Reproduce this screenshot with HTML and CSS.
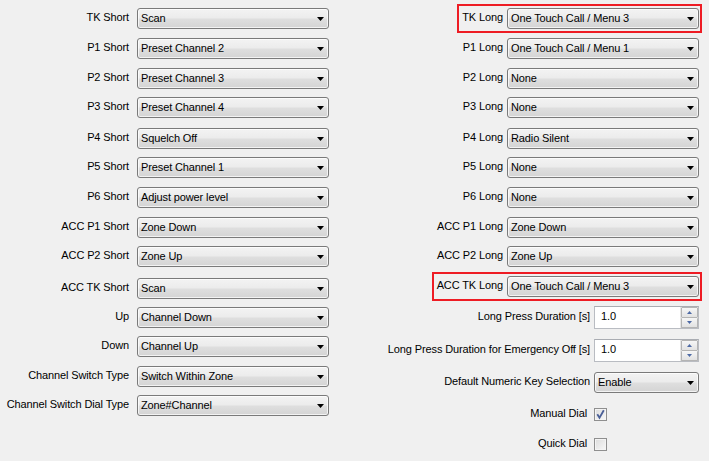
FILE: index.html
```html
<!DOCTYPE html>
<html>
<head>
<meta charset="utf-8">
<link rel="stylesheet" href="styles.css">
</head>
<body>
<div class="page">
  <div class="col col-left">
    <div class="row"><span class="lbl">TK Short</span><div class="combo"><span class="val">Scan</span><svg class="arr" width="7" height="4" viewBox="0 0 7 4"><path d="M0 0H7L3.5 4Z"/></svg></div></div>
    <div class="row"><span class="lbl">P1 Short</span><div class="combo"><span class="val">Preset Channel 2</span><svg class="arr" width="7" height="4" viewBox="0 0 7 4"><path d="M0 0H7L3.5 4Z"/></svg></div></div>
    <div class="row"><span class="lbl">P2 Short</span><div class="combo"><span class="val">Preset Channel 3</span><svg class="arr" width="7" height="4" viewBox="0 0 7 4"><path d="M0 0H7L3.5 4Z"/></svg></div></div>
    <div class="row"><span class="lbl">P3 Short</span><div class="combo"><span class="val">Preset Channel 4</span><svg class="arr" width="7" height="4" viewBox="0 0 7 4"><path d="M0 0H7L3.5 4Z"/></svg></div></div>
    <div class="row"><span class="lbl">P4 Short</span><div class="combo"><span class="val">Squelch Off</span><svg class="arr" width="7" height="4" viewBox="0 0 7 4"><path d="M0 0H7L3.5 4Z"/></svg></div></div>
    <div class="row"><span class="lbl">P5 Short</span><div class="combo"><span class="val">Preset Channel 1</span><svg class="arr" width="7" height="4" viewBox="0 0 7 4"><path d="M0 0H7L3.5 4Z"/></svg></div></div>
    <div class="row"><span class="lbl">P6 Short</span><div class="combo"><span class="val">Adjust power level</span><svg class="arr" width="7" height="4" viewBox="0 0 7 4"><path d="M0 0H7L3.5 4Z"/></svg></div></div>
    <div class="row"><span class="lbl">ACC P1 Short</span><div class="combo"><span class="val">Zone Down</span><svg class="arr" width="7" height="4" viewBox="0 0 7 4"><path d="M0 0H7L3.5 4Z"/></svg></div></div>
    <div class="row"><span class="lbl">ACC P2 Short</span><div class="combo"><span class="val">Zone Up</span><svg class="arr" width="7" height="4" viewBox="0 0 7 4"><path d="M0 0H7L3.5 4Z"/></svg></div></div>
    <div class="row"><span class="lbl">ACC TK Short</span><div class="combo"><span class="val">Scan</span><svg class="arr" width="7" height="4" viewBox="0 0 7 4"><path d="M0 0H7L3.5 4Z"/></svg></div></div>
    <div class="row"><span class="lbl">Up</span><div class="combo"><span class="val">Channel Down</span><svg class="arr" width="7" height="4" viewBox="0 0 7 4"><path d="M0 0H7L3.5 4Z"/></svg></div></div>
    <div class="row"><span class="lbl">Down</span><div class="combo"><span class="val">Channel Up</span><svg class="arr" width="7" height="4" viewBox="0 0 7 4"><path d="M0 0H7L3.5 4Z"/></svg></div></div>
    <div class="row"><span class="lbl">Channel Switch Type</span><div class="combo"><span class="val">Switch Within Zone</span><svg class="arr" width="7" height="4" viewBox="0 0 7 4"><path d="M0 0H7L3.5 4Z"/></svg></div></div>
    <div class="row"><span class="lbl">Channel Switch Dial Type</span><div class="combo"><span class="val">Zone#Channel</span><svg class="arr" width="7" height="4" viewBox="0 0 7 4"><path d="M0 0H7L3.5 4Z"/></svg></div></div>
  </div>

  <div class="col col-right">
    <div class="row"><div class="hl"><span class="lbl">TK Long</span><div class="combo"><span class="val">One Touch Call / Menu 3</span><svg class="arr" width="7" height="4" viewBox="0 0 7 4"><path d="M0 0H7L3.5 4Z"/></svg></div></div></div>
    <div class="row"><span class="lbl">P1 Long</span><div class="combo"><span class="val">One Touch Call / Menu 1</span><svg class="arr" width="7" height="4" viewBox="0 0 7 4"><path d="M0 0H7L3.5 4Z"/></svg></div></div>
    <div class="row"><span class="lbl">P2 Long</span><div class="combo"><span class="val">None</span><svg class="arr" width="7" height="4" viewBox="0 0 7 4"><path d="M0 0H7L3.5 4Z"/></svg></div></div>
    <div class="row"><span class="lbl">P3 Long</span><div class="combo"><span class="val">None</span><svg class="arr" width="7" height="4" viewBox="0 0 7 4"><path d="M0 0H7L3.5 4Z"/></svg></div></div>
    <div class="row"><span class="lbl">P4 Long</span><div class="combo"><span class="val">Radio Silent</span><svg class="arr" width="7" height="4" viewBox="0 0 7 4"><path d="M0 0H7L3.5 4Z"/></svg></div></div>
    <div class="row"><span class="lbl">P5 Long</span><div class="combo"><span class="val">None</span><svg class="arr" width="7" height="4" viewBox="0 0 7 4"><path d="M0 0H7L3.5 4Z"/></svg></div></div>
    <div class="row"><span class="lbl">P6 Long</span><div class="combo"><span class="val">None</span><svg class="arr" width="7" height="4" viewBox="0 0 7 4"><path d="M0 0H7L3.5 4Z"/></svg></div></div>
    <div class="row"><span class="lbl">ACC P1 Long</span><div class="combo"><span class="val">Zone Down</span><svg class="arr" width="7" height="4" viewBox="0 0 7 4"><path d="M0 0H7L3.5 4Z"/></svg></div></div>
    <div class="row"><span class="lbl">ACC P2 Long</span><div class="combo"><span class="val">Zone Up</span><svg class="arr" width="7" height="4" viewBox="0 0 7 4"><path d="M0 0H7L3.5 4Z"/></svg></div></div>
    <div class="row"><div class="hl"><span class="lbl">ACC TK Long</span><div class="combo"><span class="val">One Touch Call / Menu 3</span><svg class="arr" width="7" height="4" viewBox="0 0 7 4"><path d="M0 0H7L3.5 4Z"/></svg></div></div></div>
    <div class="row"><span class="lbl">Long Press Duration [s]</span><div class="spin"><span class="val">1.0</span><div class="spin-btns"><span class="sb"><svg width="5" height="3" viewBox="0 0 5 3"><path d="M0 3H5L2.5 0Z"/></svg></span><span class="sb"><svg width="5" height="3" viewBox="0 0 5 3"><path d="M0 0H5L2.5 3Z"/></svg></span></div></div></div>
    <div class="row"><span class="lbl">Long Press Duration for Emergency Off [s]</span><div class="spin"><span class="val">1.0</span><div class="spin-btns"><span class="sb"><svg width="5" height="3" viewBox="0 0 5 3"><path d="M0 3H5L2.5 0Z"/></svg></span><span class="sb"><svg width="5" height="3" viewBox="0 0 5 3"><path d="M0 0H5L2.5 3Z"/></svg></span></div></div></div>
    <div class="row"><span class="lbl">Default Numeric Key Selection</span><div class="combo combo-sm"><span class="val">Enable</span><svg class="arr" width="7" height="4" viewBox="0 0 7 4"><path d="M0 0H7L3.5 4Z"/></svg></div></div>
    <div class="row"><span class="lbl lbl-chk">Manual Dial</span><div class="chk-slot"><span class="chk"><svg width="11" height="11" viewBox="0 0 11 11"><path d="M2.3 5.3L4.5 8.8L8.8 1.3" fill="none" stroke="#4a5f97" stroke-width="1.8"/></svg></span></div></div>
    <div class="row"><span class="lbl lbl-chk">Quick Dial</span><div class="chk-slot"><span class="chk"></span></div></div>
  </div>
</div>
</body>
</html>
```
FILE: styles.css
```css
html, body {
  margin: 0;
  padding: 0;
  background: #f0f0f0;
}
body {
  font-family: "Liberation Sans", Arial, sans-serif;
  font-size: 11px;
  letter-spacing: -0.12px;
  color: #000;
  width: 709px;
  height: 461px;
  overflow: hidden;
}
.page {
  display: flex;
  padding-top: 8px;
}
.col {
  display: grid;
  grid-template-columns: 1fr;
  align-items: start;
}
.col-left {
  width: 329px;
  grid-template-rows: 30px 30px 29px 31px 29px 30px 30px 29px 32px 29px 29px 30px 29px 21px;
}
.col-right {
  flex: 1;
  padding-right: 10px;
  grid-template-rows: 30px 30px 29px 31px 29px 30px 30px 29px 30px 30px 33px 33px 36px 30px 13px;
}
.row {
  display: flex;
  align-items: center;
  justify-content: flex-end;
}
.col-left .row { gap: 8px; }
.col-right .row { gap: 4px; }
.lbl {
  white-space: nowrap;
  line-height: 13px;
  position: relative;
  top: -1px;
}
.hl {
  display: flex;
  align-items: center;
  gap: 4px;
  position: relative;
}
.hl::after {
  content: "";
  position: absolute;
  left: -5px;
  right: -3px;
  top: -4px;
  bottom: -4px;
  border: 2px solid #ee1c24;
  pointer-events: none;
}
.combo {
  box-sizing: border-box;
  width: 192px;
  height: 21px;
  border: 1px solid #7a7a7a;
  border-radius: 3px;
  background: linear-gradient(#f3f3f3 0%, #ececec 45%, #dedede 55%, #d4d4d4 100%);
  box-shadow: inset 0 0 0 1px rgba(255,255,255,0.7);
  display: flex;
  align-items: center;
  justify-content: space-between;
  padding: 0 4px 0 3px;
}
.combo-sm { width: 105px; }
.val {
  white-space: nowrap;
  line-height: 13px;
}
.arr { display: block; fill: #000; }
.spin {
  box-sizing: border-box;
  width: 105px;
  height: 23px;
  background: #fff;
  border: 1px solid #b9bcc2;
  border-top-color: #a9acb2;
  display: flex;
  align-items: flex-start;
  justify-content: space-between;
  padding: 0 0 0 6px;
}
.spin .val { margin-top: 3px; }
.spin-btns {
  display: flex;
  flex-direction: column;
  width: 17px;
  height: 21px;
  border-left: 1px solid #e6e6e6;
}
.sb {
  flex: 1;
  display: flex;
  align-items: center;
  justify-content: center;
  border: 1px solid #b4b4b4;
  border-radius: 1px;
  background: linear-gradient(#f6f6f6, #e2e2e2);
}
.sb + .sb { border-top: none; }
.sb svg { display: block; fill: #4e6aa5; }
.chk-slot {
  width: 105px;
  display: flex;
}
.lbl-chk { margin-right: 3px; }
.chk {
  box-sizing: border-box;
  width: 13px;
  height: 13px;
  border: 1px solid #8f8f8f;
  background: linear-gradient(135deg, #dcdcdc, #f8f8f8);
  box-shadow: inset 0 0 0 1px #f4f4f4;
  display: flex;
  align-items: center;
  justify-content: center;
}
.chk svg { display: block; }
```
